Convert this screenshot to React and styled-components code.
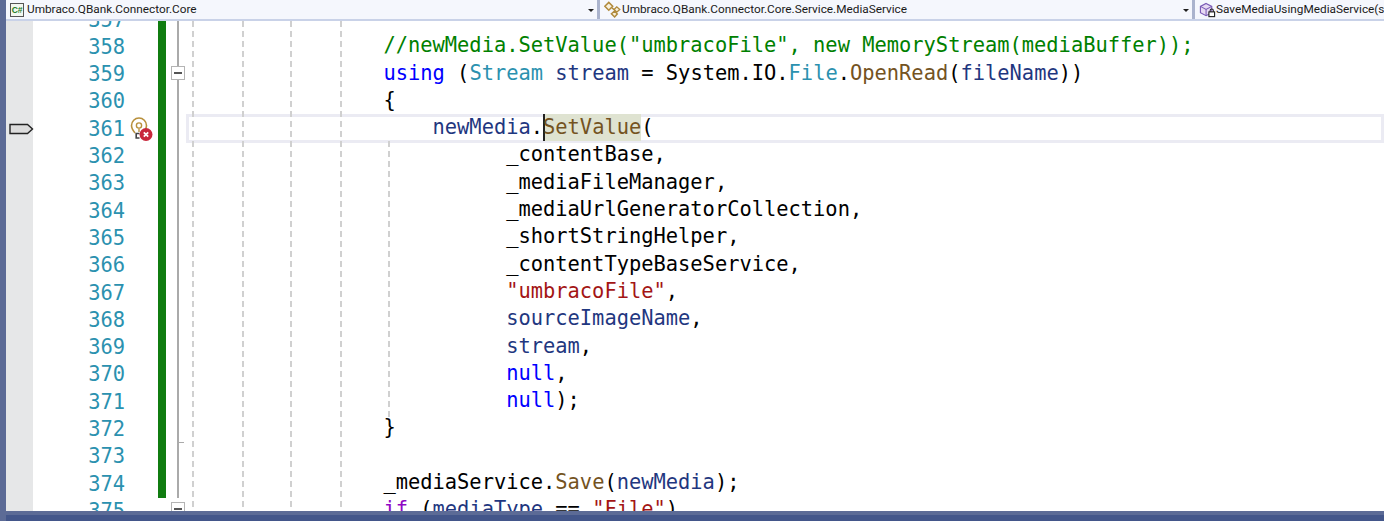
import React from 'react';
import styled, { createGlobalStyle } from 'styled-components';

const ROW = 27.31;

const colors = {
  plain: '#000000',
  keyword: '#0000ff',
  control: '#8f08c4',
  type: '#2b91af',
  method: '#74531f',
  local: '#1f377f',
  string: '#a31515',
  comment: '#008000',
};

const Global = createGlobalStyle`
  html, body {
    margin: 0;
    padding: 0;
    background: #ffffff;
    overflow: hidden;
  }
`;

const Frame = styled.div`
  display: flex;
  width: 1384px;
  height: 521px;
  background: #5c6b96;
`;

const Main = styled.div`
  display: flex;
  flex-direction: column;
  flex: 1;
  min-width: 0;
  margin-left: 6px;
`;

const Toolbar = styled.div`
  display: flex;
  flex: none;
  height: 19px;
  background: #f5f7fd;
  border-bottom: 2px solid #c9d2e8;
`;

const Dropdown = styled.div`
  position: relative;
  display: flex;
  align-items: center;
  flex: none;
  box-sizing: border-box;
  width: ${(p) => p.$width}px;
  padding-left: 4px;
  overflow: hidden;
  border-right: ${(p) => (p.$last ? 'none' : '3px solid #aab3cd')};
`;

const DropdownText = styled.span`
  margin-left: ${(p) => p.$gap}px;
  font-family: Roboto, sans-serif;
  font-size: 11.8px;
  line-height: 19px;
  color: #1a1a1a;
  white-space: nowrap;
`;

const CsIcon = styled.span`
  display: flex;
  flex: none;
  align-items: center;
  justify-content: center;
  box-sizing: border-box;
  width: 14px;
  height: 14px;
  border: 1px solid #555555;
  background: #f2f7f0;
  font-family: 'Liberation Sans', sans-serif;
  font-size: 8.5px;
  font-weight: bold;
  letter-spacing: -0.3px;
  color: #1d7d1d;
`;

const Arrow = styled.span`
  position: absolute;
  top: 9px;
  right: 3px;
  width: 0;
  height: 0;
  border-left: 3px solid transparent;
  border-right: 3px solid transparent;
  border-top: 3px solid #1e1e1e;
`;

const Editor = styled.div`
  position: relative;
  flex: 1;
  min-height: 0;
  overflow: hidden;
  background: #ffffff;
`;

const Lines = styled.div`
  margin-top: -16px;
`;

const Row = styled.div`
  display: grid;
  grid-template-columns: 27px 92px 33px 8px 20px 1fr;
  height: ${ROW}px;
  font-family: 'DejaVu Sans Mono', monospace;
  font-size: 20.4px;
  line-height: ${ROW}px;
`;

const GlyphCell = styled.div`
  display: flex;
  align-items: center;
  padding-left: 3px;
  background: #e6e7e8;
`;

const NumberCell = styled.div`
  padding-top: 1.6px;
  text-align: right;
  color: #2b91af;
`;

const HintCell = styled.div`
  position: relative;
`;

const ChangeCell = styled.div`
  background: ${(p) => (p.$changed ? '#107c10' : 'transparent')};
`;

const OutlineCell = styled.div`
  position: relative;

  &::before {
    content: '';
    display: ${(p) => (p.$inside ? 'block' : 'none')};
    position: absolute;
    top: 0;
    bottom: 0;
    left: 11px;
    width: 2px;
    background: #aaaaaa;
  }

  &::after {
    content: '';
    display: ${(p) => (p.$end ? 'block' : 'none')};
    position: absolute;
    bottom: 0;
    left: 13px;
    width: 5px;
    height: 1px;
    background: #aaaaaa;
  }
`;

const Collapse = styled.div`
  position: absolute;
  top: 6px;
  left: 5px;
  display: flex;
  align-items: center;
  justify-content: center;
  box-sizing: border-box;
  width: 14px;
  height: 14px;
  background: #ffffff;
  border: 1px solid #b4b4b4;

  &::before {
    content: '';
    width: 8px;
    height: 2px;
    background: #555555;
  }
`;

const CodeCell = styled.div`
  line-height: ${ROW - 1}px;
  padding-left: 1px;
  white-space: pre;
  color: #000000;
  box-shadow: ${(p) => (p.$current ? 'inset 0 0 0 3px #ebebf3' : 'none')};
`;

const Token = styled.span`
  color: ${(p) => colors[p.$kind]};
`;

const Highlight = styled.span`
  display: inline-block;
  height: ${ROW}px;
  vertical-align: top;
  background: #dfe3d1;
  box-shadow: inset 2px 0 0 #222222;
  color: ${colors.method};
`;

const Guide = styled.div`
  position: absolute;
  left: ${(p) => p.$x}px;
  top: ${(p) => p.$top}px;
  height: ${(p) => p.$height}px;
  width: 2px;
  background: repeating-linear-gradient(to bottom, #d0d0d0 0 6px, transparent 6px 10px);
`;

const BottomStripLight = styled.div`
  flex: none;
  height: 4px;
  background: #5c6b96;
`;

const BottomStrip = styled.div`
  flex: none;
  height: 6px;
  background: #43568a;
`;

const Svg = styled.svg`
  display: block;
  flex: none;
`;

const NamespaceIcon = () => (
  <Svg width="17" height="17" viewBox="0 0 16 16" fill="none">
    <path d="M.8 5 4.5 1.3 8.2 5 4.5 8.7Z" fill="#f8f0dc" stroke="#b08a3c" strokeWidth="1.4" />
    <path d="M7.5 6.5 10 8.5" stroke="#b08a3c" strokeWidth="1.4" />
    <path d="M9.5 8 12 5.5 14.8 8 12 10.5Z" fill="#f8f0dc" stroke="#b08a3c" strokeWidth="1.3" />
    <path d="M7 12 10 9.5 12.5 12.2 10 15Z" fill="#f8f0dc" stroke="#b08a3c" strokeWidth="1.4" />
  </Svg>
);

const MethodIcon = () => (
  <Svg width="17" height="16" viewBox="0 0 18 16" fill="none">
    <path d="M7.5 1 13.5 4.2V10.8L7.5 14 1.5 10.8V4.2Z" fill="#e7daf3" stroke="#7a5ab5" strokeWidth="1.2" />
    <path d="M1.5 4.2 7.5 7.5 13.5 4.2M7.5 7.5V14" stroke="#7a5ab5" strokeWidth="1.1" />
    <rect x="10.5" y="10" width="6" height="5" fill="#ffffff" stroke="#222222" strokeWidth="1.2" />
    <path d="M11.8 10V8.6a1.7 1.7 0 0 1 3.4 0V10" stroke="#222222" strokeWidth="1.1" />
  </Svg>
);

const Breakpoint = () => (
  <Svg width="25" height="12" viewBox="0 0 25 12" fill="none">
    <path d="M1 1.5H18.5L23.5 6 18.5 10.5H1Z" fill="#dcdcdc" stroke="#222222" strokeWidth="1.4" />
  </Svg>
);

const BulbWrap = styled.div`
  position: absolute;
  top: -1px;
  left: 5px;
`;

const BulbIcon = () => (
  <BulbWrap>
    <Svg width="26" height="28" viewBox="0 0 26 28" fill="none">
      <path d="M5 20C3 17.5 1.5 15.5 1.5 12.5a7.5 7.5 0 0 1 15 0c0 3-1.5 5-3.5 7.5" stroke="#b8903c" strokeWidth="1.6" />
      <circle cx="9" cy="12.5" r="2.6" stroke="#b8903c" strokeWidth="1.4" />
      <path d="M9 15.5V19" stroke="#b8903c" strokeWidth="1.4" />
      <path d="M9.5 20.5H6.2V25H9.5" stroke="#444444" strokeWidth="1.6" />
      <circle cx="16" cy="21.5" r="6.5" fill="#c8283c" />
      <path d="M13.8 19.3 18.2 23.7M18.2 19.3 13.8 23.7" stroke="#ffffff" strokeWidth="1.7" />
    </Svg>
  </BulbWrap>
);

const indent = (n) => ['plain', ' '.repeat(n)];

const code = {
  357: [],
  358: [indent(16), ['comment', '//newMedia.SetValue("umbracoFile", new MemoryStream(mediaBuffer));']],
  359: [
    indent(16),
    ['keyword', 'using'],
    ['plain', ' ('],
    ['type', 'Stream'],
    ['plain', ' '],
    ['local', 'stream'],
    ['plain', ' = System.IO.'],
    ['type', 'File'],
    ['plain', '.'],
    ['method', 'OpenRead'],
    ['plain', '('],
    ['local', 'fileName'],
    ['plain', '))'],
  ],
  360: [indent(16), ['plain', '{']],
  361: [indent(20), ['local', 'newMedia'], ['plain', '.'], ['mark', 'SetValue'], ['plain', '(']],
  362: [indent(26), ['plain', '_contentBase,']],
  363: [indent(26), ['plain', '_mediaFileManager,']],
  364: [indent(26), ['plain', '_mediaUrlGeneratorCollection,']],
  365: [indent(26), ['plain', '_shortStringHelper,']],
  366: [indent(26), ['plain', '_contentTypeBaseService,']],
  367: [indent(26), ['string', '"umbracoFile"'], ['plain', ',']],
  368: [indent(26), ['local', 'sourceImageName'], ['plain', ',']],
  369: [indent(26), ['local', 'stream'], ['plain', ',']],
  370: [indent(26), ['keyword', 'null'], ['plain', ',']],
  371: [indent(26), ['keyword', 'null'], ['plain', ');']],
  372: [indent(16), ['plain', '}']],
  373: [],
  374: [
    indent(16),
    ['plain', '_mediaService.'],
    ['method', 'Save'],
    ['plain', '('],
    ['local', 'newMedia'],
    ['plain', ');'],
  ],
  375: [
    indent(16),
    ['control', 'if'],
    ['plain', ' ('],
    ['local', 'mediaType'],
    ['plain', ' == '],
    ['string', '"File"'],
    ['plain', ')'],
  ],
};

const numbers = Object.keys(code).map(Number);

const App = () => (
  <>
    <Global />
    <Frame>
      <Main>
        <Toolbar>
          <Dropdown $width={594}>
            <CsIcon>C#</CsIcon>
            <DropdownText $gap={3}>Umbraco.QBank.Connector.Core</DropdownText>
            <Arrow />
          </Dropdown>
          <Dropdown $width={595}>
            <NamespaceIcon />
            <DropdownText $gap={1}>Umbraco.QBank.Connector.Core.Service.MediaService</DropdownText>
            <Arrow />
          </Dropdown>
          <Dropdown $width={189} $last>
            <MethodIcon />
            <DropdownText $gap={0}>SaveMediaUsingMediaService(st</DropdownText>
          </Dropdown>
        </Toolbar>
        <Editor>
          <Lines>
            {numbers.map((n) => (
              <Row key={n}>
                <GlyphCell>{n === 361 && <Breakpoint />}</GlyphCell>
                <NumberCell>{n}</NumberCell>
                <HintCell>{n === 361 && <BulbIcon />}</HintCell>
                <ChangeCell $changed={n < 375} />
                <OutlineCell $inside={n < 375} $end={n === 372}>
                  {(n === 359 || n === 375) && <Collapse />}
                </OutlineCell>
                <CodeCell $current={n === 361}>
                  {code[n].map(([kind, text], i) =>
                    kind === 'mark' ? (
                      <Highlight key={i}>{text}</Highlight>
                    ) : (
                      <Token key={i} $kind={kind}>
                        {text}
                      </Token>
                    )
                  )}
                </CodeCell>
              </Row>
            ))}
          </Lines>
          <Guide $x={186} $top={0} $height={490} />
          <Guide $x={236} $top={0} $height={490} />
          <Guide $x={284} $top={0} $height={490} />
          <Guide $x={334} $top={0} $height={490} />
          <Guide $x={382} $top={120} $height={276} />
        </Editor>
        <BottomStripLight />
        <BottomStrip />
      </Main>
    </Frame>
  </>
);

export default App;
